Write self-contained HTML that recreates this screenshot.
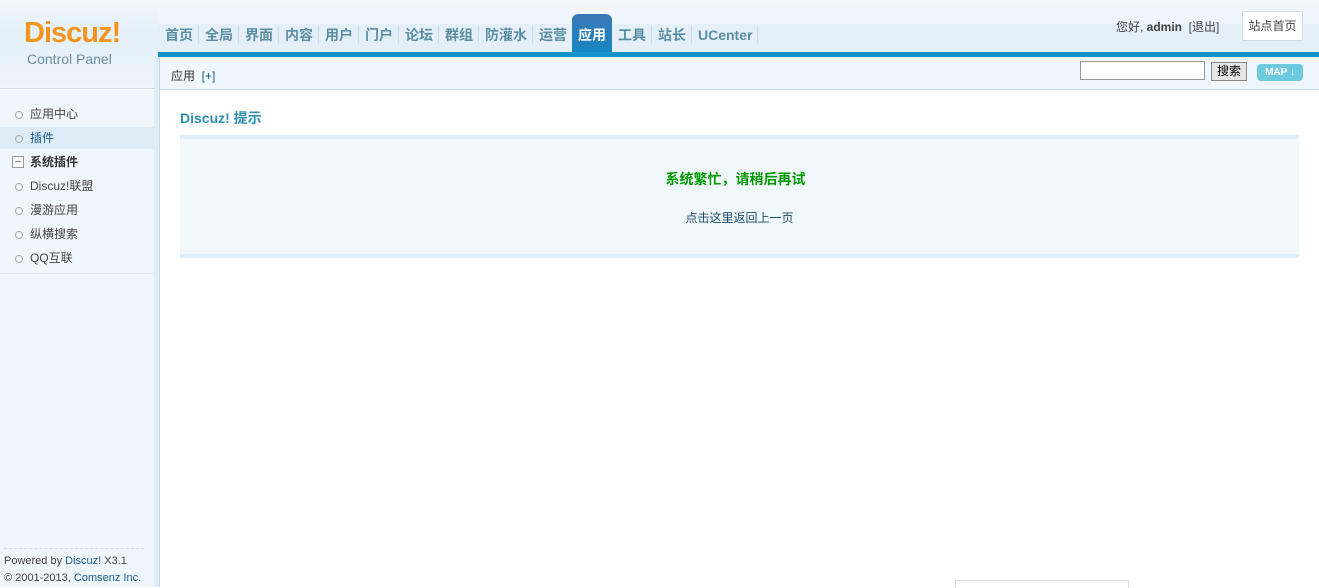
<!DOCTYPE html>
<html><head><meta charset="utf-8"><style>
*{margin:0;padding:0;box-sizing:border-box}
body{width:1319px;height:587px;overflow:hidden;background:#fff;font-family:"Liberation Sans","Noto Sans CJK SC",sans-serif;font-size:12px;color:#333;position:relative}
.hd{position:absolute;left:0;top:0;width:1319px;height:57px;background:linear-gradient(#f2f7fc,#e6f1fa)}
.hdl{position:absolute;left:0;top:0;width:158px;height:89px;background:linear-gradient(#f2f7fc,#e4eff8 40%,#eef5fb);border-bottom:1px solid #c9dce8}
.hd2{position:absolute;left:158px;top:24px;width:1161px;height:28px;background:#e4eff8}
.logo{position:absolute;left:24px;top:17px;font:bold 29px "Liberation Sans",sans-serif;color:#f7941d;letter-spacing:-1px}
.cp{position:absolute;left:27px;top:51px;font-size:14px;color:#6a8da0}
.nav{position:absolute;left:159px;top:26px;display:flex;font-size:14px;font-weight:bold;color:#5a8ea3}
.nav span{padding:0 5px 0 6px;border-right:1px solid #d0dfea;height:18px;line-height:18px}
.nav span.on{background:linear-gradient(#3a78b5,#1587c6);color:#fff;height:42px;margin-top:-12px;padding-top:12px;border-radius:6px 6px 0 0;border:none;width:40px;text-align:center;padding-left:0;padding-right:0;margin-left:-1px}
.bar{position:absolute;left:158px;top:52px;width:1161px;height:5px;background:#1294c8}
.sub{position:absolute;left:158px;top:57px;width:1161px;height:33px;background:#f0f7fc;border-bottom:1px solid #c9dce8}
.side{position:absolute;left:0;top:90px;width:154px;height:497px;background:#f0f7fc}
.sideb{position:absolute;left:154px;top:57px;width:6px;height:530px;background:#e0ecf6;border-right:1px solid #c4d9ea}
.side .it{position:absolute;left:0;width:154px;height:22px;line-height:22px;padding-left:30px;font-size:12px;color:#444}
.side .it:before{content:"";position:absolute;left:15px;top:8px;width:6px;height:6px;border:1px solid #aaa;border-radius:50%}
.side .bd:before{display:none}
</style></head><body>
<div class="hd"></div><div class="hdl"></div><div class="hd2"></div>
<div class="logo">Discuz!</div>
<div class="cp">Control Panel</div>
<div class="nav"><span>首页</span><span>全局</span><span>界面</span><span>内容</span><span>用户</span><span>门户</span><span>论坛</span><span>群组</span><span>防灌水</span><span>运营</span><span class="on">应用</span><span>工具</span><span>站长</span><span>UCenter</span></div>
<div style="position:absolute;left:1116px;top:18px;font-size:12px;color:#444">您好, <b>admin</b> &nbsp;[退出]</div>
<div style="position:absolute;left:1242px;top:11px;width:61px;height:30px;background:#fff;border:1px solid #cfdbe4;line-height:28px;text-align:center;color:#444">站点首页</div>
<div class="bar"></div>
<div class="sub"></div>
<div style="position:absolute;left:171px;top:67px;color:#333">应用 &nbsp;<span style="color:#1a5a8a">[+]</span></div>
<div style="position:absolute;left:1080px;top:61px;width:125px;height:19px;border:1px solid #999;background:#fff"></div>
<div style="position:absolute;left:1211px;top:62px;width:36px;height:19px;border:1px solid #888;background:#e6e6e6;text-align:center;line-height:17px;color:#000">搜索</div>
<div style="position:absolute;left:1257px;top:64px;width:46px;height:17px;border-radius:4px;background:#6dcbe0;color:#fff;font-size:10px;font-weight:bold;text-align:center;line-height:17px">MAP ↓</div>
<div class="sideb"></div>
<div class="side">
<div class="it" style="top:13px">应用中心</div>
<div class="it" style="top:37px;background:#ddecf7;color:#1a5a8a">插件</div>
<div class="it bd" style="top:61px;font-weight:bold;color:#333"><span style="position:absolute;left:12px;top:5px;width:12px;height:12px;border:1px solid #999;background:#fff;font-size:10px;line-height:9px;text-align:center;font-weight:normal">–</span>系统插件</div>
<div class="it" style="top:85px">Discuz!联盟</div>
<div class="it" style="top:109px">漫游应用</div>
<div class="it" style="top:133px">纵横搜索</div>
<div class="it" style="top:157px">QQ互联</div>
<div style="position:absolute;left:0;top:183px;width:154px;border-top:1px solid #e0ebf3"></div>
<div style="position:absolute;left:4px;top:458px;width:140px;border-top:1px dashed #d0dde6"></div>
<div style="position:absolute;left:4px;top:463px;font-size:11px;color:#444;line-height:17px">Powered by <span style="color:#1a5a8a">Discuz!</span> X3.1<br>© 2001-2013, <span style="color:#1a5a8a">Comsenz Inc.</span></div>
</div>
<div style="position:absolute;left:180px;top:108px;font-size:14px;font-weight:bold;color:#2b8fb3">Discuz! 提示</div>
<div style="position:absolute;left:180px;top:135px;width:1119px;height:123px;background:#f1f8fc;border-top:4px solid #deedf6;border-bottom:4px solid #deedf6"></div>
<div style="position:absolute;left:176px;top:169px;width:1119px;text-align:center;font-size:14px;font-weight:bold;color:#090">系统繁忙，请稍后再试</div>
<div style="position:absolute;left:180px;top:209px;width:1119px;text-align:center;font-size:12px;color:#1a4a6a">点击这里返回上一页</div>
<div style="position:absolute;left:955px;top:580px;width:174px;height:8px;border:1px solid #ddd;border-bottom:none"></div>
</body></html>
